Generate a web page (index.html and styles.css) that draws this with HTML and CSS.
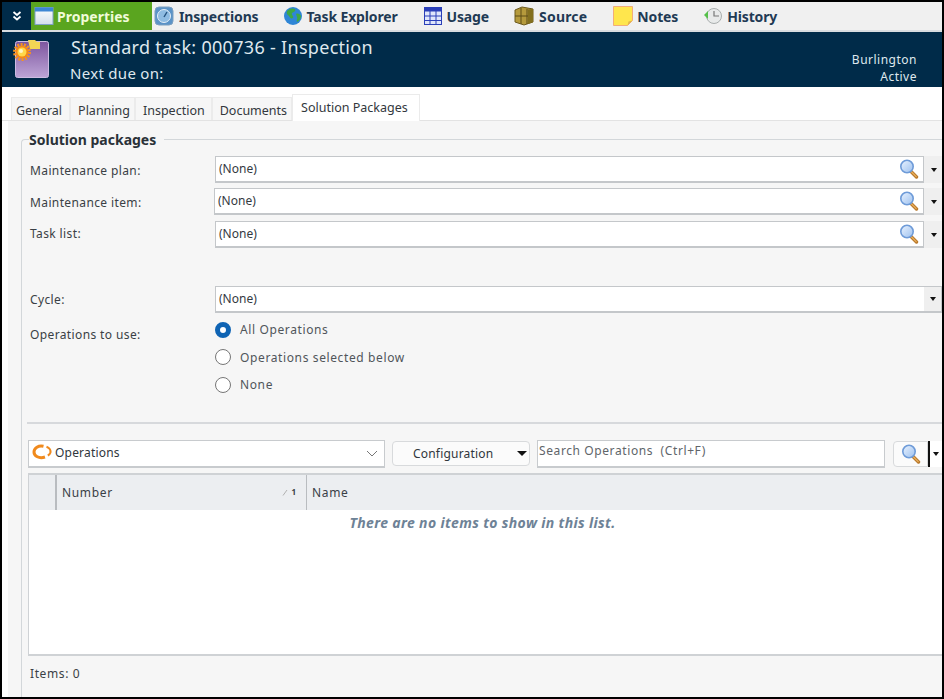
FILE: index.html
```html
<!DOCTYPE html>
<html lang="en">
<head>
<meta charset="utf-8">
<title>Standard task</title>
<link rel="stylesheet" href="styles.css">
</head>
<body>
<svg class="defs" width="0" height="0" aria-hidden="true">
  <defs>
    <linearGradient id="lens" x1="0" y1="0" x2="1" y2="1"><stop offset="0" stop-color="#eaf3ff"/><stop offset="1" stop-color="#9cc0ee"/></linearGradient>
    <linearGradient id="task" x1="0" y1="0" x2="0" y2="1"><stop offset="0" stop-color="#7d559f"/><stop offset="1" stop-color="#bda5d6"/></linearGradient>
    <linearGradient id="win" x1="0" y1="0" x2="0" y2="1"><stop offset="0" stop-color="#fdfeff"/><stop offset="1" stop-color="#d3dfec"/></linearGradient>
    <symbol id="mag" viewBox="0 0 20 20">
      <path d="M12 12.500l5.500 5.500" stroke="#b9792c" stroke-width="3.400" stroke-linecap="round"/>
      <path d="M12.600 13l4.600 4.600" stroke="#eab05c" stroke-width="1.200" stroke-linecap="round"/>
      <circle cx="8" cy="7.500" r="6.200" fill="url(#lens)" stroke="#6e9bd8" stroke-width="1.600"/>
    </symbol>
  </defs>
</svg>
<div class="app">
  <nav class="toolbar">
    <div class="collapse">
      <svg width="12" height="12" viewBox="0 0 12 12"><path d="M2.500 2l3.500 3 3.500-3M2.500 6.500l3.500 3 3.500-3" fill="none" stroke="#fff" stroke-width="1.800"/></svg>
    </div>
    <a class="tool active">
      <svg width="20" height="20" viewBox="0 0 20 20"><rect x="1" y="1.500" width="18" height="17" fill="url(#win)" stroke="#7fa2c7"/><rect x="1" y="1.500" width="18" height="4" fill="#3c86d4"/></svg>
      Properties</a>
    <a class="tool tool-inspections">
      <svg width="20" height="20" viewBox="0 0 20 20"><rect x="1" y="1" width="18" height="18" rx="4" fill="#5b93c7" stroke="#7c9fc0"/><circle cx="10" cy="10" r="6.500" fill="#8fbce2" stroke="#e4eef7"/><path d="M10 11l3-5" stroke="#24527f" stroke-width="1.400"/></svg>
      Inspections</a>
    <a class="tool tool-explorer">
      <svg width="20" height="20" viewBox="0 0 20 20"><circle cx="10" cy="10" r="9" fill="#2f86d6"/><path d="M4 5c3-3 6-3 8-2 1 2-1 3-3 4-1 2 2 3 1 5-2 1-3 0-4-2-1-1-3-2-2-5zM13 8c2-1 4 0 5 2 0 3-2 5-4 6-1-2 1-3 0-5z" fill="#3fa845"/></svg>
      Task Explorer</a>
    <a class="tool tool-usage">
      <svg width="18" height="18" viewBox="0 0 18 18"><rect x="0.500" y="0.500" width="17" height="17" fill="#dfe6fb" stroke="#2b3fb8"/><rect x="0.500" y="0.500" width="17" height="4" fill="#2b3fb8"/><path d="M0 9h18M0 13.500h18M6 4v14M12 4v14" stroke="#2b3fb8"/></svg>
      Usage</a>
    <a class="tool tool-source">
      <svg width="20" height="20" viewBox="0 0 20 20"><path d="M1 4l7-3 11 2v13l-9 3-9-3z" fill="#b59a3c" stroke="#6d5a1d"/><path d="M7 2v16M13 3v15M1 10l18 0" stroke="#5d4c16"/><path d="M14 3.500l5-.500v13l-5 2z" fill="#83701f"/></svg>
      Source</a>
    <a class="tool tool-notes">
      <svg width="20" height="20" viewBox="0 0 20 20"><path d="M.500.500h19v14l-5 5H.500z" fill="#ffe64d" stroke="#f2ad7a"/><path d="M14.500 19.500l1-4 4-1z" fill="#e2b54b"/></svg>
      Notes</a>
    <a class="tool tool-history">
      <svg width="20" height="20" viewBox="0 0 20 20"><circle cx="11" cy="10" r="7.500" fill="#e8eaea" stroke="#a9aeae"/><path d="M11 5v5h5" fill="none" stroke="#777" stroke-width="1.200"/><path d="M1 9l4-4v8z" fill="#56c04a"/></svg>
      History</a>
  </nav>

  <header class="banner">
    <svg class="banner-icon" width="38" height="40" viewBox="0 0 38 40">
      <rect x="2.500" y="2.500" width="33" height="36" rx="2" fill="url(#task)" stroke="#cdbce2"/>
      <path d="M15 1h7l2 2h3v7H17z" fill="#f3d654"/>
      <circle cx="9" cy="13" r="6.500" fill="#f58a16"/>
      <circle cx="9" cy="13" r="7.500" fill="none" stroke="#f7941d" stroke-width="3" stroke-dasharray="2 1.370"/>
      <circle cx="9" cy="13" r="4.500" fill="#ffd84a"/>
      <circle cx="8" cy="12" r="2" fill="#fff6c8"/>
    </svg>
    <div class="banner-main">
      <div class="banner-title">Standard task: 000736 - Inspection</div>
      <div class="banner-sub">Next due on:</div>
    </div>
    <div class="banner-side">
      <div>Burlington</div>
      <div>Active</div>
    </div>
  </header>

  <div class="tabs">
    <span class="tab tab-first">General</span>
    <span class="tab">Planning</span>
    <span class="tab tab-wide">Inspection</span>
    <span class="tab">Documents</span>
    <span class="tab tab-active">Solution Packages</span>
  </div>

  <main class="panel">
    <fieldset class="group">
      <legend>Solution packages</legend>
      <div class="row row-plan">
        <label>Maintenance plan:</label>
        <div class="lookup"><span class="input">(None)</span><svg class="mag"><use href="#mag"/></svg></div>
        <span class="drop"><i class="caret"></i></span>
      </div>
      <div class="row row-item">
        <label>Maintenance item:</label>
        <div class="lookup"><span class="input">(None)</span><svg class="mag"><use href="#mag"/></svg></div>
        <span class="drop"><i class="caret"></i></span>
      </div>
      <div class="row row-list">
        <label>Task list:</label>
        <div class="lookup"><span class="input">(None)</span><svg class="mag"><use href="#mag"/></svg></div>
        <span class="drop"><i class="caret"></i></span>
      </div>
      <div class="row row-cycle">
        <label>Cycle:</label>
        <div class="lookup lookup-wide"><span class="input">(None)</span><span class="drop-inner"><i class="caret"></i></span></div>
      </div>
      <div class="ops">
        <label>Operations to use:</label>
        <div class="radios">
          <div class="radio-row"><span class="radio radio-on"></span>All Operations</div>
          <div class="radio-row"><span class="radio"></span>Operations selected below</div>
          <div class="radio-row"><span class="radio"></span>None</div>
        </div>
      </div>
      <hr class="divider">
      <div class="list-tools">
        <div class="combo">
          <svg width="20" height="16" viewBox="0 0 20 16"><path d="M11.500 2.200C6.500 1 2 4 2 8c0 4 5 7 11 5" fill="none" stroke="#f08a1d" stroke-width="3"/><path d="M14.500 2.800c3 1 4.500 3.500 3.800 6-.4 1.300-1.300 2.200-2.500 2.800" fill="none" stroke="#f08a1d" stroke-width="2.200"/></svg>
          <span class="combo-text">Operations</span>
          <svg class="chev" width="12" height="8" viewBox="0 0 12 8"><path d="M1 1l5 5 5-5" fill="none" stroke="#777" stroke-width="1"/></svg>
        </div>
        <button class="config"><span>Configuration</span><i class="caret caret-big"></i></button>
        <div class="search">Search Operations&nbsp; (Ctrl+F)</div>
        <button class="search-btn"><svg class="mag"><use href="#mag"/></svg></button>
        <span class="search-drop"><i class="caret"></i></span>
      </div>
      <div class="grid">
        <div class="grid-head">
          <div class="col col-sel"></div>
          <div class="col col-num"><span>Number</span><span class="sort"><svg width="7" height="7" viewBox="0 0 7 7"><path d="M1 6.500L5 1" stroke="#b0b0b0"/></svg><b>1</b></span></div>
          <div class="col col-name">Name</div>
        </div>
        <div class="grid-empty">There are no items to show in this list.</div>
      </div>
      <div class="count">Items: 0</div>
    </fieldset>
  </main>
</div>
</body>
</html>
```
FILE: styles.css
```css
* { box-sizing: border-box; }
html, body { margin: 0; padding: 0; height: 100%; }
body { background: #fff; font-family: "Noto Sans", "DejaVu Sans", sans-serif; font-size: 12px; color: #3a3f45; overflow: hidden; }
.defs { display: block; height: 0; }
.app { width: 944px; height: 699px; border: 2px solid #000; display: flex; flex-direction: column; overflow: hidden; background: #fff; }

.toolbar { height: 30px; flex: none; display: flex; align-items: stretch; background: #f0f0f0; border-bottom: 2px solid #d9dde0; }
.collapse { width: 29px; background: #002b49; display: flex; align-items: center; justify-content: center; }
.tool { display: flex; align-items: center; font-size: 14px; font-weight: 700; letter-spacing: -0.15px; color: #1f3a54; white-space: nowrap; }
.tool.active { width: 121px; padding-left: 3px; gap: 3px; letter-spacing: 0; background: #5aa51f; color: #f0fbd8; }
.tool-inspections { margin-left: 2px; gap: 5px; }
.tool-explorer { margin-left: 24px; gap: 4px; }
.tool-usage { margin-left: 26px; gap: 5px; }
.tool-source { margin-left: 25px; gap: 5px; letter-spacing: 0.2px; }
.tool-notes { margin-left: 26px; gap: 4px; }
.tool-history { margin-left: 25px; gap: 4px; }

.banner { height: 55px; flex: none; background: #002b49; color: #dfe8ee; display: flex; padding: 0 25px 0 11px; }
.banner-icon { margin-top: 7px; flex: none; }
.banner-main { margin-left: 20px; flex: 1; }
.banner-title { font-size: 18px; line-height: 24px; margin-top: 3px; letter-spacing: 0.3px; }
.banner-sub { font-size: 15px; line-height: 20px; margin-top: 4px; margin-left: -1px; letter-spacing: 0.3px; }
.banner-side { text-align: right; font-size: 12px; line-height: 17px; margin-top: 19px; letter-spacing: 0.5px; }

.tabs { height: 34px; flex: none; display: flex; align-items: flex-end; padding-left: 9px; border-bottom: 1px solid #e3e3e3; background: #fff; }
.tab { height: 23px; padding: 4px 4px 0 7px; background: #f6f6f6; border: 1px solid #ebebeb; border-bottom: none; font-size: 12.500px; color: #33383d; white-space: nowrap; }
.tab-first { padding-left: 4px; padding-right: 7px; }
.tab-wide { padding-right: 6px; }
.tab-active { height: 27px; padding: 4px 11px 0 8px; background: #fff; margin-bottom: -1px; position: relative; }

.panel { flex: 1; margin-left: 6px; background: #f6f6f6; padding: 10px 0 0 13px; min-height: 0; }
.group { margin: 0; padding: 0 0 0 6px; border: solid #d3d7da; border-width: 1px 0 0 1px; border-top-left-radius: 4px; height: 100%; min-width: 0; }
.group legend { margin-left: 1px; padding: 0 8px 0 0; font-size: 14px; font-weight: 700; color: #2a3138; line-height: 17px; }

.row { display: flex; height: 27px; align-items: stretch; }
.row label, .ops label { width: 187px; flex: none; padding: 6px 0 0 2px; letter-spacing: 0.38px; white-space: nowrap; }
.row-plan { margin-top: 8px; }
.row-item { margin-top: 5px; }
.row-item label { width: 186px; }
.row-list { margin-top: 6px; }
.row-list label { padding-top: 4px; }
.row-cycle { margin-top: 38px; }
.row-cycle label { padding-top: 5px; }
.lookup { flex: 1; display: flex; align-items: center; background: #fff; border: 1px solid #c4c7ca; border-bottom-width: 2px; position: relative; }
.input { flex: 1; padding: 0 0 2px 3px; color: #34393f; }
.mag { width: 20px; height: 20px; flex: none; margin-right: 4px; }
.drop { width: 18px; flex: none; display: flex; align-items: center; justify-content: center; padding-left: 1px; background: #efefef; }
.drop-inner { width: 17px; align-self: stretch; display: flex; align-items: center; justify-content: center; padding-left: 1px; background: #efefef; }
.caret { display: block; width: 0; height: 0; border: 3.500px solid transparent; border-top: 4px solid #111; border-bottom: none; }
.caret-big { border-width: 5px 5px 0; border-top-color: #111; }

.ops { display: flex; margin-top: 3px; }
.ops label { padding-top: 10px; }
.radios { display: flex; flex-direction: column; letter-spacing: 0.62px; }
.radio-row { display: flex; align-items: center; height: 27.500px; gap: 9px; color: #50555a; }
.radio { width: 16px; height: 16px; border-radius: 50%; background: #fff; border: 1.500px solid #767676; flex: none; }
.radio-on { border: 5px solid #0f64b4; }

.divider { height: 0; margin: 23px 0 0 -1px; border: none; border-top: 2px solid #d7d9dc; }
.list-tools { display: flex; align-items: center; height: 28px; margin: 16px 0 0; }
.combo { width: 357px; height: 28px; background: #fff; border: 1px solid #c8cbce; border-bottom-width: 2px; display: flex; align-items: center; padding: 0 4px 2px 3px; gap: 3px; color: #30363c; }
.combo-text { flex: 1; letter-spacing: 0.2px; }
.chev { margin-top: 3px; margin-right: 2px; }
.config { width: 138px; height: 25px; margin-left: 7px; background: #fbfbfb; border: 1px solid #d8dadc; border-radius: 4px; display: flex; align-items: center; padding: 0 2px 0 20px; font: inherit; letter-spacing: 0.2px; color: #30363c; }
.config span { flex: 1; text-align: left; }
.search { width: 348px; height: 28px; margin-left: 7px; background: #fff; border: 1px solid #c8cbce; border-bottom-width: 2px; padding: 0 0 4px 1px; color: #60656a; line-height: 19px; letter-spacing: 0.6px; }
.search-btn { width: 35px; height: 26px; margin-left: 8px; background: #fbfbfb; border: 1px solid #d8dadc; border-radius: 4px 0 0 4px; display: flex; align-items: center; justify-content: center; padding: 0; }
.search-btn .mag { margin: 0; }
.search-drop { flex: 1; height: 26px; background: #fff; border-left: 2px solid #111; display: flex; align-items: center; justify-content: center; }

.grid { height: 183px; margin: 5px 0 0; border: solid #cfd2d5; border-width: 2px 0 2px 1px; background: #fff; }
.grid-head { height: 35px; display: flex; background: #eceef1; }
.col { display: flex; align-items: center; padding: 0 5px; letter-spacing: 0.65px; color: #3a4046; }
.col-sel { width: 28px; border-right: 2px solid #b9bcc0; }
.col-num { width: 250px; justify-content: space-between; border-right: 1px solid #b9bcc0; padding-right: 10px; }
.col-name { flex: 1; }
.sort { display: flex; align-items: flex-end; gap: 2px; font-size: 8px; letter-spacing: 0; }
.sort b { font-weight: 700; line-height: 8px; }
.grid-empty { text-align: center; font-weight: 700; font-style: italic; font-size: 14px; letter-spacing: 0.35px; color: #6e8296; padding-top: 3px; line-height: 19px; margin-right: 6px; }
.count { margin: 9px 0 0 2px; line-height: 18px; letter-spacing: 0.6px; }
```
